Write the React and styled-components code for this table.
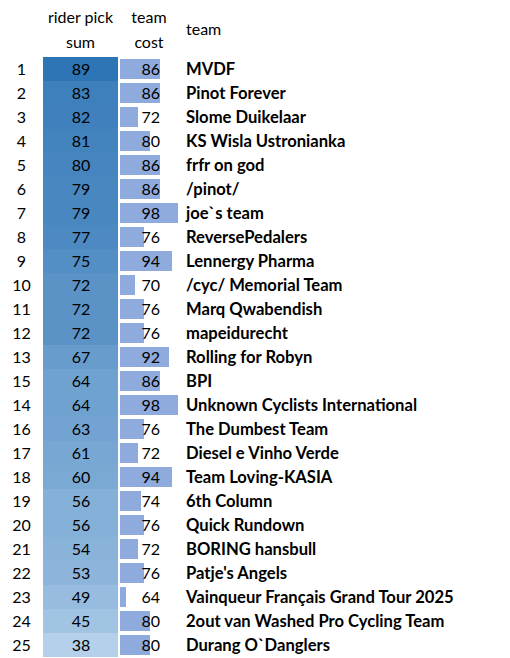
import React from "react";
import styled, { createGlobalStyle } from "styled-components";

const GlobalStyle = createGlobalStyle`
  body {
    margin: 0;
    background: #ffffff;
    font-family: Lato, "Open Sans", "Liberation Sans", sans-serif;
    font-size: 16px;
    color: #000000;
  }
`;

const rows = [
  [1, 89, 86, "MVDF"],
  [2, 83, 86, "Pinot Forever"],
  [3, 82, 72, "Slome Duikelaar"],
  [4, 81, 80, "KS Wisla Ustronianka"],
  [5, 80, 86, "frfr on god"],
  [6, 79, 86, "/pinot/"],
  [7, 79, 98, "joe`s team"],
  [8, 77, 76, "ReversePedalers"],
  [9, 75, 94, "Lennergy Pharma"],
  [10, 72, 70, "/cyc/ Memorial Team"],
  [11, 72, 76, "Marq Qwabendish"],
  [12, 72, 76, "mapeidurecht"],
  [13, 67, 92, "Rolling for Robyn"],
  [15, 64, 86, "BPI"],
  [14, 64, 98, "Unknown Cyclists International"],
  [16, 63, 76, "The Dumbest Team"],
  [17, 61, 72, "Diesel e Vinho Verde"],
  [18, 60, 94, "Team Loving-KASIA"],
  [19, 56, 74, "6th Column"],
  [20, 56, 76, "Quick Rundown"],
  [21, 54, 72, "BORING hansbull"],
  [22, 53, 76, "Patje's Angels"],
  [23, 49, 64, "Vainqueur Français Grand Tour 2025"],
  [24, 45, 80, "2out van Washed Pro Cycling Team"],
  [25, 38, 80, "Durang O`Danglers"],
];

// colour scale between the max and min pick sums
const scaleColor = (v) => {
  const t = (89 - v) / (89 - 38);
  const from = [46, 117, 182];
  const to = [180, 208, 234];
  const c = from.map((f, i) => Math.round(f + (to[i] - f) * t));
  return `rgb(${c[0]}, ${c[1]}, ${c[2]})`;
};

const barWidth = (v) => Math.round(6 + (v - 64) * 1.53);

const Sheet = styled.div`
  width: 510px;
`;

const Grid = styled.div`
  display: grid;
  grid-template-columns: 43px 75px 62px 1fr;
`;

const Header = styled(Grid)`
  height: 57px;
  align-items: center;
`;

const HeadCell = styled.div`
  text-align: ${(p) => p.align || "center"};
  line-height: 25px;
  padding-left: ${(p) => (p.align === "left" ? "6px" : "0")};
`;

const Row = styled(Grid)`
  height: 24px;
  line-height: 24px;
`;

const Rank = styled.div`
  text-align: center;
`;

const Sum = styled.div`
  text-align: center;
  padding-left: 1px;
`;

const CostCell = styled.div`
  position: relative;
  padding-left: 2px;
`;

const Bar = styled.div`
  position: absolute;
  left: 2px;
  top: 2px;
  bottom: 2px;
  background: #8faadc;
`;

const CostValue = styled.span`
  position: relative;
  display: block;
  width: 40px;
  text-align: right;
`;

const Team = styled.div`
  font-weight: 700;
  font-size: 16.6px;
  padding-left: 6px;
  white-space: nowrap;
`;

export default function App() {
  return (
    <Sheet>
      <GlobalStyle />
      <Header>
        <div />
        <HeadCell>
          rider pick
          <br />
          sum
        </HeadCell>
        <HeadCell>
          team
          <br />
          cost
        </HeadCell>
        <HeadCell align="left">team</HeadCell>
      </Header>
      {rows.map(([rank, sum, cost, team]) => (
        <Row key={team}>
          <Rank>{rank}</Rank>
          <Sum style={{ background: scaleColor(sum) }}>{sum}</Sum>
          <CostCell>
            <Bar style={{ width: barWidth(cost) }} />
            <CostValue>{cost}</CostValue>
          </CostCell>
          <Team>{team}</Team>
        </Row>
      ))}
    </Sheet>
  );
}
